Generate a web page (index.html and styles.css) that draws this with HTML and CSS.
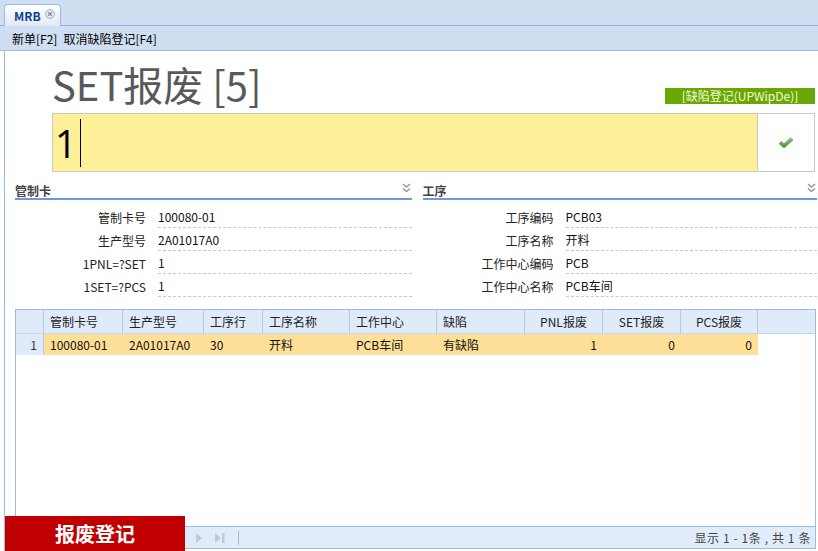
FILE: index.html
```html
<!DOCTYPE html>
<html>
<head>
<meta charset="utf-8">
<link rel="stylesheet" href="styles.css">
</head>
<body>
<div class="page">
  <div class="tabbar">
    <div class="tab">
      <span class="tab-title">MRB</span>
      <span class="tab-close"><svg width="10" height="10" viewBox="0 0 10 10"><circle cx="5" cy="5" r="4.3" fill="#e8eef7" stroke="#9aa9bd" stroke-width="1"/><path d="M3.2 3.2 L6.8 6.8 M6.8 3.2 L3.2 6.8" stroke="#7a8aa0" stroke-width="1.3"/></svg></span>
    </div>
  </div>
  <div class="toolbar">
    <span class="tbtn">新单[F2]</span>
    <span class="tbtn">取消缺陷登记[F4]</span>
  </div>
  <div class="main">
    <div class="head">
      <div class="title">SET报废 [5]</div>
      <div class="badge">[缺陷登记(UPWipDe)]</div>
    </div>
    <div class="inputrow">
      <div class="bigInput"><span class="val">1</span><span class="caret"></span></div>
      <div class="okbtn">
        <svg width="16" height="12" viewBox="0 0 16 12"><defs><linearGradient id="g" x1="0" y1="0" x2="0" y2="1"><stop offset="0" stop-color="#8fd07a"/><stop offset="1" stop-color="#3f8a34"/></linearGradient></defs><path d="M1 6.5 L3.5 4.5 L6 7 L12.5 1 L15 3 L6 11 Z" fill="url(#g)" stroke="#4d8f3f" stroke-width="0.6"/></svg>
      </div>
    </div>
    <div class="sections">
      <div class="section">
        <div class="sec-head"><span>管制卡</span><svg class="chev" width="9" height="10" viewBox="0 0 9 10"><path d="M1 1 L4.5 4 L8 1 M1 5.5 L4.5 8.5 L8 5.5" fill="none" stroke="#9a9a9a" stroke-width="1.6"/></svg></div>
        <div class="field"><label>管制卡号</label><div class="fv">100080-01</div></div>
        <div class="field"><label>生产型号</label><div class="fv">2A01017A0</div></div>
        <div class="field"><label>1PNL=?SET</label><div class="fv">1</div></div>
        <div class="field"><label>1SET=?PCS</label><div class="fv">1</div></div>
      </div>
      <div class="section right">
        <div class="sec-head"><span>工序</span><svg class="chev" width="9" height="10" viewBox="0 0 9 10"><path d="M1 1 L4.5 4 L8 1 M1 5.5 L4.5 8.5 L8 5.5" fill="none" stroke="#9a9a9a" stroke-width="1.6"/></svg></div>
        <div class="field"><label>工序编码</label><div class="fv">PCB03</div></div>
        <div class="field"><label>工序名称</label><div class="fv">开料</div></div>
        <div class="field"><label>工作中心编码</label><div class="fv">PCB</div></div>
        <div class="field"><label>工作中心名称</label><div class="fv">PCB车间</div></div>
      </div>
    </div>
    <div class="grid">
      <div class="ghead">
        <div class="c cn"></div>
        <div class="c c1">管制卡号</div>
        <div class="c c2">生产型号</div>
        <div class="c c3">工序行</div>
        <div class="c c4">工序名称</div>
        <div class="c c5">工作中心</div>
        <div class="c c6">缺陷</div>
        <div class="c c7 m">PNL报废</div>
        <div class="c c8 m">SET报废</div>
        <div class="c c9 m">PCS报废</div>
        <div class="c cf"></div>
      </div>
      <div class="gbody">
        <div class="grow">
          <div class="c cn r">1</div>
          <div class="c c1">100080-01</div>
          <div class="c c2">2A01017A0</div>
          <div class="c c3">30</div>
          <div class="c c4">开料</div>
          <div class="c c5">PCB车间</div>
          <div class="c c6">有缺陷</div>
          <div class="c c7 r">1</div>
          <div class="c c8 r">0</div>
          <div class="c c9 r">0</div>
        </div>
      </div>
      <div class="pager">
        <div class="pnav">
          <svg width="10" height="12" viewBox="0 0 10 12"><path d="M2 1 L8 6 L2 11 Z" fill="#c4c9cf"/></svg>
          <svg width="12" height="12" viewBox="0 0 12 12"><path d="M1 1 L7 6 L1 11 Z" fill="#c4c9cf"/><rect x="8" y="1" width="2.5" height="10" fill="#c4c9cf"/></svg>
          <span class="psep"></span>
        </div>
        <div class="pinfo">显示 1 - 1条 , 共 1 条</div>
      </div>
    </div>
  </div>
  <div class="redbtn">报废登记</div>
</div>
</body>
</html>
```
FILE: styles.css
```css
* { box-sizing: border-box; }
html, body { margin: 0; padding: 0; }
body {
  width: 818px;
  height: 551px;
  overflow: hidden;
  background: #ffffff;
  font-family: "Noto Sans CJK SC", "Noto Sans", sans-serif;
  font-size: 12px;
  color: #000;
}
.page { position: relative; width: 818px; height: 551px; }
.tabbar {
  height: 26px;
  background: #d0def2;
  border-bottom: 1px solid #8db2e3;
  padding: 4px 0 0 4px;
}
.tab {
  width: 57px;
  height: 22px;
  background: linear-gradient(#ffffff, #dfeaf8);
  border: 1px solid #99bbe8;
  border-bottom: none;
  border-radius: 4px 4px 0 0;
  display: flex;
  align-items: center;
  padding-left: 9px;
  gap: 4px;
}
.tab-title { font-weight: bold; color: #15428b; font-size: 12px; }
.tab-close { display: flex; margin-top: -4px; }
.toolbar {
  height: 25px;
  background: #d0def2;
  border-bottom: 1px solid #99bbe8;
  display: flex;
  align-items: center;
  padding-left: 12px;
  gap: 6px;
  color: #000;
}
.main {
  margin-left: 4px;
  border-left: 1px solid #99bbe8;
  height: 500px;
  padding: 0 1px 0 10px;
}
.head {
  display: flex;
  justify-content: space-between;
  align-items: flex-end;
  padding-left: 37px;
  height: 62px;
  padding-bottom: 9px;
}
.title {
  font-size: 40px;
  line-height: 44px;
  color: #595959;
  margin-bottom: -2px;
}
.badge {
  background: #67a804;
  color: #f6f9d8;
  font-size: 12px;
  line-height: 16px;
  height: 16px;
  padding: 0 10px;
  width: 150px;
  text-align: center;
  margin-right: 2px;
}
.inputrow {
  display: flex;
  margin-left: 37px;
  height: 59px;
  margin-right: 2px;
}
.bigInput {
  width: 705px;
  background: #fef099;
  border: 1px solid #c9c9c9;
  border-right: none;
  display: flex;
  align-items: center;
  padding-left: 2px;
}
.bigInput .val { font-size: 38px; line-height: 40px; color: #000; font-family: "Open Sans", sans-serif; }
.caret { width: 1px; height: 48px; background: #000; margin-left: 3px; }
.okbtn {
  flex: 1;
  background: #fff;
  border: 1px solid #c9c9c9;
  display: flex;
  align-items: center;
  justify-content: center;
}
.sections {
  display: flex;
  gap: 11px;
  margin-top: 10px;
}
.section { width: 397px; }
.section.right { width: 395px; }
.sec-head {
  height: 18px;
  border-bottom: 2px solid #6a9ad9;
  display: flex;
  justify-content: space-between;
  align-items: center;
  font-weight: bold;
  color: #444;
  padding-right: 1px;
  font-size: 12px;
}
.sec-head .chev { margin-top: -4px; }
.field {
  display: flex;
  height: 23px;
  align-items: flex-end;
}
.section .field:nth-child(2) { margin-top: 5px; }
.field label {
  width: 143px;
  text-align: right;
  padding-right: 12px;
  line-height: 21px;
  color: #222;
}
.fv {
  flex: 1;
  border-bottom: 1px dashed #c8c8c8;
  line-height: 21px;
  padding-left: 0;
  color: #111;
}
.grid {
  margin-top: 12px;
  width: 801px;
  height: 240px;
  border: 1px solid #99bbe8;
  display: flex;
  flex-direction: column;
}
.ghead {
  display: flex;
  height: 24px;
  background: #e0ebf9;
  border-bottom: 1px solid #c5d6ee;
}
.ghead .c { border-right: 1px solid #b4c9e8; line-height: 23px; color: #222; }
.ghead .cf { border-right: none; flex: 1; }
.c { padding: 0 6px; white-space: nowrap; overflow: hidden; }
.r { text-align: right; }
.m { text-align: center; }
.cn { width: 28px; }
.c1 { width: 79px; }
.c2 { width: 81px; }
.c3 { width: 59px; }
.c4 { width: 87px; }
.c5 { width: 87px; }
.c6 { width: 88px; }
.c7 { width: 78px; }
.c8 { width: 78px; }
.c9 { width: 77px; }
.gbody { flex: 1; background: #fff; }
.grow {
  display: flex;
  height: 21px;
  width: 742px;
  background: #fedf98;
}
.grow .c { line-height: 21px; color: #111; }
.grow .cn { background: #e0ebf9; border-right: 1px solid #b4c9e8; color: #333; }
.pager {
  height: 22px;
  background: #e1ecfb;
  border-top: 1px solid #99bbe8;
  display: flex;
  justify-content: space-between;
  align-items: center;
  padding: 0 4px 0 178px;
}
.pnav { display: flex; align-items: center; gap: 10px; }
.psep { width: 1px; height: 14px; background: #99bbe8; margin-left: 2px; }
.pinfo { color: #444; letter-spacing: 0.6px; }
.redbtn {
  position: absolute;
  left: 5px;
  top: 516px;
  width: 180px;
  height: 35px;
  background: #c00000;
  color: #fff;
  font-weight: bold;
  font-size: 20px;
  display: flex;
  align-items: center;
  justify-content: center;
}
```
